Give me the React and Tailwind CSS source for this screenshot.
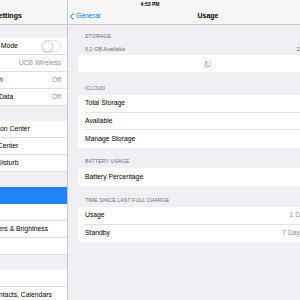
const sidebarGroups = [
  [
    { label: 'Airplane Mode', toggle: true },
    { label: 'Wi-Fi', value: 'UCB Wireless' },
    { label: 'Bluetooth', value: 'Off' },
    { label: 'Cellular Data', value: 'Off' },
  ],
  [
    { label: 'Notification Center' },
    { label: 'Control Center' },
    { label: 'Do Not Disturb' },
  ],
  [
    { label: 'General', selected: true },
    { label: 'Sounds' },
    { label: 'Wallpapers & Brightness' },
    { label: 'Privacy' },
  ],
  [
    { label: 'iCloud' },
    { label: 'Mail, Contacts, Calendars' },
  ],
]

function Toggle() {
  return (
    <div className="w-[20px] h-[12px] rounded-full border border-[#e3e3e6] bg-white flex items-center">
      <div className="w-[11px] h-[11px] rounded-full bg-white border border-[#d6d6da] shadow-[0_1px_1px_rgba(0,0,0,0.15)]" />
    </div>
  )
}

function Spinner() {
  const spokes = Array.from({ length: 12 }, (_, i) => i)
  return (
    <svg width="8" height="8" viewBox="-10 -10 20 20">
      {spokes.map(i => (
        <line
          key={i}
          x1="0" y1="-4.5" x2="0" y2="-9"
          stroke="#8e8e93"
          strokeWidth="2"
          strokeLinecap="round"
          opacity={0.25 + (i / 12) * 0.75}
          transform={`rotate(${i * 30})`}
        />
      ))}
    </svg>
  )
}

function SidebarRow({ item }) {
  return (
    <div className={`h-[17px] pl-[34px] ${item.selected ? 'bg-[#1f84f5]' : 'bg-white'}`}>
      <div className={`h-full flex items-center justify-between pr-[6px] ${item.selected ? '' : 'border-b border-[#dedee2]'}`}>
        <span className={`text-[6.8px] whitespace-nowrap ${item.selected ? 'text-white' : 'text-black'}`}>{item.label}</span>
        {item.value && <span className="text-[6.8px] text-[#8e8e93] whitespace-nowrap">{item.value}</span>}
        {item.toggle && <Toggle />}
      </div>
    </div>
  )
}

function SectionHeader({ children, className }) {
  return (
    <div className={`px-[7px] ${className}`}>
      <div className="h-[6px] flex items-center text-[5.2px] uppercase text-[#6d6d72] tracking-[0.02em] whitespace-nowrap">{children}</div>
    </div>
  )
}

function Row({ label, value, chevron, toggle, last }) {
  return (
    <div className="h-[17.5px] pl-[7px]">
      <div className={`h-full flex items-center justify-between pr-[7px] ${last ? '' : 'border-b border-[#e2e2e5]'}`}>
        <span className="text-[6.8px] text-black whitespace-nowrap">{label}</span>
        <div className="flex items-center gap-[3px]">
          {value && <span className="text-[6.8px] text-[#8e8e93] whitespace-nowrap">{value}</span>}
          {toggle && <Toggle />}
          {chevron && (
            <svg width="4" height="7" viewBox="0 0 4 7">
              <path d="M0.5 0.5 L3.3 3.5 L0.5 6.5" fill="none" stroke="#c7c7cc" strokeWidth="1" />
            </svg>
          )}
        </div>
      </div>
    </div>
  )
}

export default function App() {
  return (
    <div className="relative w-[300px] h-[300px] overflow-hidden bg-[#efeff4] flex font-['Liberation_Sans',Arial,sans-serif]">
      {/* Status bar time */}
      <div className="absolute top-0 left-0 w-full h-[9px] flex items-center justify-center text-[5px] font-bold text-black z-10">
        4:53 PM
      </div>

      {/* Master list */}
      <div className="w-[68px] shrink-0 overflow-hidden border-r border-[#c8c7cc]">
        <div className="w-[127px] -ml-[60px]">
          <div className="h-[25px] pt-[8px] bg-[#f7f7f7] border-b border-[#c8c7cc]">
            <div className="h-[16px] pl-[9px] flex items-center justify-center text-[7px] font-bold text-black">Settings</div>
          </div>
          <div className="h-[13px]" />
          {sidebarGroups.map((group, gi) => (
            <div key={gi} className={gi > 0 ? 'mt-[15px]' : ''}>
              {group.map(item => <SidebarRow key={item.label} item={item} />)}
            </div>
          ))}
        </div>
      </div>

      {/* Detail */}
      <div className="flex-1 overflow-hidden">
        <div className="w-[280px]">
          <div className="h-[25px] pt-[8px] bg-[#f7f7f7] border-b border-[#c8c7cc]">
            <div className="h-[16px] grid grid-cols-[1fr_auto_1fr] items-center">
              <div className="flex items-center gap-[2px] pl-[2px] text-[#007aff]">
                <svg width="4" height="7" viewBox="0 0 4 7">
                  <path d="M3.5 0.5 L0.7 3.5 L3.5 6.5" fill="none" stroke="#007aff" strokeWidth="1" />
                </svg>
                <span className="text-[6.8px]">General</span>
              </div>
              <div className="text-[7px] font-bold text-black">Usage</div>
              <div />
            </div>
          </div>

          <div className="px-[10px]">
            <div className="pt-[9px] pb-[3px]">
              <SectionHeader>Storage</SectionHeader>
              <div className="mt-[6px] h-[6px] px-[7px] flex items-center justify-between text-[5.5px] text-[#6d6d72] whitespace-nowrap">
                <span>6.2 GB Available</span>
                <span>22.5 GB Used</span>
              </div>
            </div>
            <div className="h-[17px] bg-white rounded-[3px] flex items-center justify-center">
              <Spinner />
            </div>

            <SectionHeader className="pt-[14px] pb-[3px]">iCloud</SectionHeader>
            <div className="bg-white rounded-[3px]">
              <Row label="Total Storage" value="5.0 GB" />
              <Row label="Available" value="4.8 GB" />
              <Row label="Manage Storage" chevron last />
            </div>

            <SectionHeader className="pt-[11.5px] pb-[3px]">Battery Usage</SectionHeader>
            <div className="bg-white rounded-[3px]">
              <Row label="Battery Percentage" toggle last />
            </div>

            <SectionHeader className="pt-[12px] pb-[3.5px]">Time since last full charge</SectionHeader>
            <div className="bg-white rounded-[3px]">
              <Row label="Usage" value="1 Day, 1 Hour" />
              <Row label="Standby" value="7 Days, 9 Hours" last />
            </div>
          </div>
        </div>
      </div>
    </div>
  )
}
